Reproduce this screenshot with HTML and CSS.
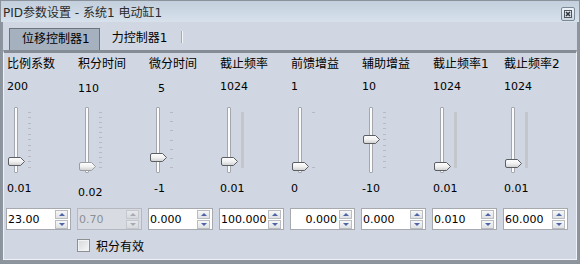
FILE: index.html
```html
<!DOCTYPE html>
<html lang="zh-CN">
<head>
  <meta charset="UTF-8" />
  <title>PID参数设置</title>
  <link rel="stylesheet" href="styles.css">
</head>
<body>
  <svg class="defs" width="0" height="0">
    <defs>
      <linearGradient id="hg" x1="0" y1="0" x2="0" y2="1">
        <stop offset="0" stop-color="#ffffff" />
        <stop offset="0.5" stop-color="#f1f1f1" />
        <stop offset="1" stop-color="#cfcfcf" />
      </linearGradient>
    </defs>
  </svg>

  <div class="window">
    <div class="titlebar">
      <span class="title">PID参数设置 - 系统1 电动缸1</span>
      <span class="close">
        <svg width="8" height="8" viewBox="0 0 8 8">
          <rect x="0.5" y="0.5" width="7" height="7" fill="none" stroke="#4b535d" />
          <path d="M2 2 L6 6 M6 2 L2 6" stroke="#2f353c" stroke-width="1.6" />
        </svg>
      </span>
    </div>

    <div class="frame">
      <div class="tabs">
        <div class="tab active">位移控制器1</div>
        <div class="tab">力控制器1</div>
        <span class="tab-sep"></span>
      </div>

      <div class="pane">
        <div class="grid">
          <!-- 比例系数 -->
          <div class="col">
            <div class="head">比例系数</div>
            <div class="num">200</div>
            <div class="slider">
              <span class="track"></span>
              <span class="ticks t11"></span>
              <svg class="handle" style="top:50px" width="18" height="9" viewBox="0 0 18 9"><path d="M2 0.5 H12.5 L16.5 4.5 L12.5 8.5 H2 Q0.5 8.5 0.5 7 V2 Q0.5 0.5 2 0.5 Z" /></svg>
            </div>
            <div class="num">0.01</div>
            <div class="spin"><span class="spin-text">23.00</span><span class="spin-btns"><span class="up"></span><span class="down"></span></span></div>
          </div>

          <!-- 积分时间 (disabled) -->
          <div class="col">
            <div class="head">积分时间</div>
            <div class="num lower">110</div>
            <div class="slider">
              <span class="track"></span>
              <span class="ticks t12"></span>
              <svg class="handle off" style="top:55px" width="18" height="9" viewBox="0 0 18 9"><path d="M2 0.5 H12.5 L16.5 4.5 L12.5 8.5 H2 Q0.5 8.5 0.5 7 V2 Q0.5 0.5 2 0.5 Z" /></svg>
            </div>
            <div class="num lower more">0.02</div>
            <div class="spin disabled"><span class="spin-text">0.70</span><span class="spin-btns"><span class="up"></span><span class="down"></span></span></div>
          </div>

          <!-- 微分时间 -->
          <div class="col">
            <div class="head">微分时间</div>
            <div class="num lower indent">5</div>
            <div class="slider">
              <span class="track"></span>
              <span class="ticks t7"></span>
              <svg class="handle" style="top:46px" width="18" height="9" viewBox="0 0 18 9"><path d="M2 0.5 H12.5 L16.5 4.5 L12.5 8.5 H2 Q0.5 8.5 0.5 7 V2 Q0.5 0.5 2 0.5 Z" /></svg>
            </div>
            <div class="num indent-min">-1</div>
            <div class="spin"><span class="spin-text">0.000</span><span class="spin-btns"><span class="up"></span><span class="down"></span></span></div>
          </div>

          <!-- 截止频率 -->
          <div class="col">
            <div class="head">截止频率</div>
            <div class="num">1024</div>
            <div class="slider">
              <span class="track"></span>
              <span class="ticks bar"></span>
              <svg class="handle" style="top:50px" width="18" height="9" viewBox="0 0 18 9"><path d="M2 0.5 H12.5 L16.5 4.5 L12.5 8.5 H2 Q0.5 8.5 0.5 7 V2 Q0.5 0.5 2 0.5 Z" /></svg>
            </div>
            <div class="num">0.01</div>
            <div class="spin"><span class="spin-text">100.000</span><span class="spin-btns"><span class="up"></span><span class="down"></span></span></div>
          </div>

          <!-- 前馈增益 -->
          <div class="col">
            <div class="head">前馈增益</div>
            <div class="num">1</div>
            <div class="slider">
              <span class="track"></span>
              <span class="ticks t2"></span>
              <svg class="handle" style="top:55px" width="18" height="9" viewBox="0 0 18 9"><path d="M2 0.5 H12.5 L16.5 4.5 L12.5 8.5 H2 Q0.5 8.5 0.5 7 V2 Q0.5 0.5 2 0.5 Z" /></svg>
            </div>
            <div class="num">0</div>
            <div class="spin right"><span class="spin-text">0.000</span><span class="spin-btns"><span class="up"></span><span class="down"></span></span></div>
          </div>

          <!-- 辅助增益 -->
          <div class="col">
            <div class="head">辅助增益</div>
            <div class="num">10</div>
            <div class="slider">
              <span class="track"></span>
              <span class="ticks t11"></span>
              <svg class="handle" style="top:28px" width="18" height="9" viewBox="0 0 18 9"><path d="M2 0.5 H12.5 L16.5 4.5 L12.5 8.5 H2 Q0.5 8.5 0.5 7 V2 Q0.5 0.5 2 0.5 Z" /></svg>
            </div>
            <div class="num">-10</div>
            <div class="spin"><span class="spin-text">0.000</span><span class="spin-btns"><span class="up"></span><span class="down"></span></span></div>
          </div>

          <!-- 截止频率1 -->
          <div class="col">
            <div class="head">截止频率1</div>
            <div class="num">1024</div>
            <div class="slider">
              <span class="track"></span>
              <span class="ticks bar"></span>
              <svg class="handle" style="top:55px" width="18" height="9" viewBox="0 0 18 9"><path d="M2 0.5 H12.5 L16.5 4.5 L12.5 8.5 H2 Q0.5 8.5 0.5 7 V2 Q0.5 0.5 2 0.5 Z" /></svg>
            </div>
            <div class="num">0.01</div>
            <div class="spin"><span class="spin-text">0.010</span><span class="spin-btns"><span class="up"></span><span class="down"></span></span></div>
          </div>

          <!-- 截止频率2 -->
          <div class="col">
            <div class="head">截止频率2</div>
            <div class="num">1024</div>
            <div class="slider">
              <span class="track"></span>
              <span class="ticks bar"></span>
              <svg class="handle" style="top:52px" width="18" height="9" viewBox="0 0 18 9"><path d="M2 0.5 H12.5 L16.5 4.5 L12.5 8.5 H2 Q0.5 8.5 0.5 7 V2 Q0.5 0.5 2 0.5 Z" /></svg>
            </div>
            <div class="num">0.01</div>
            <div class="spin"><span class="spin-text">60.000</span><span class="spin-btns"><span class="up"></span><span class="down"></span></span></div>
          </div>

          <label class="check"><span class="box"></span>积分有效</label>
        </div>
      </div>
    </div>
  </div>
</body>
</html>
```

FILE: styles.css
```css
body {
  margin: 0;
  font-family: "DejaVu Sans", "Noto Sans CJK SC", sans-serif;
  font-size: 12px;
  color: #000;
}
.defs {
  position: absolute;
}
.window {
  width: 580px;
  height: 264px;
  box-sizing: border-box;
  border: 1px solid #8a929c;
  background: #8e959e;
  display: flex;
  flex-direction: column;
}
.titlebar {
  height: 21px;
  flex: none;
  background: linear-gradient(#c3cfdc, #d6e1ec);
  display: flex;
  align-items: center;
  justify-content: space-between;
  padding: 0 4px 0 2px;
}
.title {
  color: #2a2a2a;
  font-size: 12px;
}
.close {
  width: 12px;
  height: 12px;
  border: 1px solid #7b8896;
  border-radius: 2px;
  background: linear-gradient(#eef3f8, #cdd7e2);
  display: flex;
  align-items: center;
  justify-content: center;
  margin-top: 4px;
}

/* tab widget */
.frame {
  flex: 1;
  margin: 0 2px 3px;
  display: flex;
  flex-direction: column;
  background: #d0d7e2;
}
.tabs {
  height: 28px;
  flex: none;
  display: flex;
  align-items: flex-end;
  padding-left: 6px;
}
.tab {
  height: 22px;
  line-height: 21px;
  padding: 0 11px 0 12px;
  box-sizing: border-box;
  white-space: nowrap;
}
.tab.active {
  background: #a6b1bf;
  border: 1px solid #6e747c;
  border-bottom: none;
  padding: 0 9px 0 12px;
}
.tab-sep {
  width: 1px;
  height: 12px;
  margin-bottom: 7px;
  margin-left: 3px;
  background: #a3a9b1;
  border-right: 1px solid #f4f6f9;
}
.pane {
  flex: 1;
  border-top: 3px solid #858c95;
  border-left: 1px solid #eef1f5;
  border-right: 1px solid #eef1f5;
  border-bottom: 1px solid #eef1f5;
  padding: 3px 0 0 2px;
}
.grid {
  display: grid;
  grid-template-columns: repeat(8, 65px);
  column-gap: 6px;
}
.col {
  display: flex;
  flex-direction: column;
}
.head {
  height: 16px;
  line-height: 16px;
  padding-left: 1px;
  white-space: nowrap;
  overflow: hidden;
}
.num {
  height: 16px;
  line-height: 16px;
  font-size: 11px;
  padding-left: 1px;
  margin-top: 7px;
}
.col .num + .spin {
  margin-top: 11px;
}
.slider + .num {
  margin-top: 8px;
}
.num.lower {
  padding-top: 2px;
  margin-bottom: -2px;
}
.num.more {
  padding-top: 4px;
  margin-bottom: -4px;
}
.num.indent {
  padding-left: 10px;
}
.num.indent-min {
  padding-left: 6px;
}

/* vertical slider */
.slider {
  position: relative;
  height: 66px;
  margin-top: 12px;
  display: flex;
  align-items: flex-start;
}
.track {
  width: 4px;
  height: 66px;
  box-sizing: border-box;
  margin-left: 8px;
  border: 1px solid #a4a8ae;
  border-radius: 1px;
  background: #fbfbfb;
}
.ticks {
  width: 3px;
  height: 56px;
  margin: 5px 0 0 10px;
}
.ticks.t11 {
  background: repeating-linear-gradient(#b7bbc1 0 1px, transparent 1px 5.5px);
}
.ticks.t12 {
  background: repeating-linear-gradient(#b7bbc1 0 1px, transparent 1px 5px);
}
.ticks.t7 {
  background: repeating-linear-gradient(#b7bbc1 0 1px, transparent 1px 9.1667px);
}
.ticks.t2 {
  background: repeating-linear-gradient(#b7bbc1 0 1px, transparent 1px 55px);
}
.ticks.bar {
  background: #c3c6cb;
}
.handle {
  position: absolute;
  left: 2px;
}
.handle path {
  fill: url(#hg);
  stroke: #5b5e62;
}
.handle.off path {
  stroke: #9a9da1;
}

/* spin box */
.spin {
  height: 22px;
  box-sizing: border-box;
  border: 1px solid #a6aaaf;
  background: #fff;
  display: flex;
  align-items: center;
  font-size: 11px;
}
.spin-text {
  flex: 1;
  padding-left: 1px;
}
.spin.right .spin-text {
  text-align: right;
  padding-right: 2px;
}
.spin.disabled {
  background: #d8dce2;
  border-color: #b5b9bf;
  color: #8b9096;
}
.spin-btns {
  width: 13px;
  display: flex;
  flex-direction: column;
  margin-right: 2px;
}
.spin-btns span {
  height: 9px;
  box-sizing: border-box;
  border: 1px solid #b9bdc2;
  background: linear-gradient(#f7f7f7, #dfe1e4);
  display: flex;
  align-items: center;
  justify-content: center;
}
.spin-btns .down {
  margin-top: 1px;
}
.spin-btns .up::after {
  content: "";
  border-left: 3px solid transparent;
  border-right: 3px solid transparent;
  border-bottom: 3px solid #4d64a6;
}
.spin-btns .down::after {
  content: "";
  border-left: 3px solid transparent;
  border-right: 3px solid transparent;
  border-top: 3px solid #4d64a6;
}
.spin.disabled .spin-btns span {
  border-color: #c4c7cb;
  background: linear-gradient(#e6e8eb, #d6d9dd);
}
.spin.disabled .spin-btns .up::after {
  border-bottom-color: #a7abb1;
}
.spin.disabled .spin-btns .down::after {
  border-top-color: #a7abb1;
}

/* checkbox */
.check {
  grid-column: 2 / span 2;
  margin-top: 7px;
  display: flex;
  align-items: center;
  gap: 6px;
  white-space: nowrap;
}
.box {
  width: 13px;
  height: 13px;
  box-sizing: border-box;
  border: 1px solid #8e8f90;
  background: linear-gradient(135deg, #d6d8db, #f7f7f7);
  box-shadow: inset 0 0 0 1px #f2f3f4;
}
```
